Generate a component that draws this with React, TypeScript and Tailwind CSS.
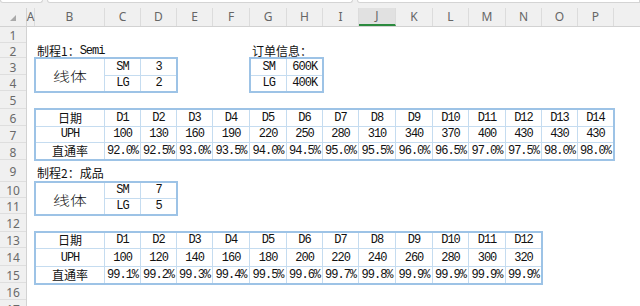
import React from "react";

const mono =
  "font-['Liberation_Mono','Noto_Sans_CJK_SC',monospace] text-[12px] tracking-[-1px] text-[#111]";
const cjk = "font-['Noto_Sans_CJK_SC',sans-serif] text-[12px] text-[#111]";

const cols = [
  { l: "A", w: "w-[8px]" },
  { l: "B", w: "w-[70px]" },
  { l: "C", w: "w-[36px]" },
  { l: "D", w: "w-[36px]" },
  { l: "E", w: "w-[36px]" },
  { l: "F", w: "w-[37px]" },
  { l: "G", w: "w-[37px]" },
  { l: "H", w: "w-[36px]" },
  { l: "I", w: "w-[36px]" },
  { l: "J", w: "w-[37px]" },
  { l: "K", w: "w-[37px]" },
  { l: "L", w: "w-[36px]" },
  { l: "M", w: "w-[37px]" },
  { l: "N", w: "w-[36px]" },
  { l: "O", w: "w-[36px]" },
  { l: "P", w: "w-[36px]" },
];

const rows = [
  { n: 1, h: "h-[16px]" },
  { n: 2, h: "h-[15px]" },
  { n: 3, h: "h-[17px]" },
  { n: 4, h: "h-[16px]" },
  { n: 5, h: "h-[18px]" },
  { n: 6, h: "h-[17px]" },
  { n: 7, h: "h-[17px]" },
  { n: 8, h: "h-[17px]" },
  { n: 9, h: "h-[22px]" },
  { n: 10, h: "h-[16px]" },
  { n: 11, h: "h-[16px]" },
  { n: 12, h: "h-[18px]" },
  { n: 13, h: "h-[16px]" },
  { n: 14, h: "h-[18px]" },
  { n: 15, h: "h-[17px]" },
  { n: 16, h: "h-[17px]" },
  { n: 17, h: "h-[17px]" },
];

const t1 = {
  days: ["D1", "D2", "D3", "D4", "D5", "D6", "D7", "D8", "D9", "D10", "D11", "D12", "D13", "D14"],
  uph: ["100", "130", "160", "190", "220", "250", "280", "310", "340", "370", "400", "430", "430", "430"],
  rate: ["92.0%", "92.5%", "93.0%", "93.5%", "94.0%", "94.5%", "95.0%", "95.5%", "96.0%", "96.5%", "97.0%", "97.5%", "98.0%", "98.0%"],
};

const t2 = {
  days: ["D1", "D2", "D3", "D4", "D5", "D6", "D7", "D8", "D9", "D10", "D11", "D12"],
  uph: ["100", "120", "140", "160", "180", "200", "220", "240", "260", "280", "300", "320"],
  rate: ["99.1%", "99.2%", "99.3%", "99.4%", "99.5%", "99.6%", "99.7%", "99.8%", "99.9%", "99.9%", "99.9%", "99.9%"],
};

function C({ children, f = mono }: { children: React.ReactNode; f?: string }) {
  return (
    <div className={`bg-white flex items-end justify-center pb-px leading-[14px] whitespace-nowrap ${f}`}>
      {children}
    </div>
  );
}

function Merged({ children }: { children: React.ReactNode }) {
  return (
    <div className="bg-white row-span-2 flex items-center justify-center pt-[3px]">
      <span className="inline-block scale-x-[1.3] font-['Noto_Sans_CJK_SC',sans-serif] font-light text-[13px] leading-[14px] text-[#111]">
        {children}
      </span>
    </div>
  );
}

export default function App() {
  return (
    <div className="w-[640px] h-[306px] overflow-hidden bg-white flex flex-col">
      {/* formula bar edge */}
      <div className="h-[8px] shrink-0 bg-[#f0f0f0] flex gap-[4px] items-start">
        <div className="w-[43px] h-[3px] bg-white border border-t-0 border-[#d4d4d4] rounded-b-[3px]" />
        <div className="w-[306px] h-[3px] bg-white border border-t-0 border-[#d4d4d4] rounded-b-[3px]" />
        <div className="flex-1 h-[3px] bg-white border border-t-0 border-[#d4d4d4] rounded-bl-[3px]" />
      </div>

      {/* column header */}
      <div className="h-[19px] shrink-0 flex bg-[#f0f0f0] border-b border-[#d2d2d2] font-['Noto_Sans',sans-serif] text-[12px] text-[#666]">
        <div className="w-[27px] shrink-0 border-r border-[#d2d2d2] flex items-center justify-center">
          <svg width="6" height="6" viewBox="0 0 6 6" className="mt-[1px]">
            <polygon points="6,0 6,6 0,6" fill="#a9a9a9" />
          </svg>
        </div>
        {cols.map((c) => (
          <div
            key={c.l}
            className={`${c.w} shrink-0 border-r border-[#dcdcdc] flex items-center justify-center overflow-visible relative ${
              c.l === "J" ? "bg-[#e1e1e1] border-b-2 border-b-[#2b8a3e]" : ""
            }`}
          >
            <span className="leading-none">{c.l}</span>
          </div>
        ))}
        <div className="flex-1" />
      </div>

      {/* body */}
      <div className="flex flex-1">
        <div className="w-[27px] shrink-0 bg-[#f0f0f0] border-r border-[#d2d2d2] flex flex-col font-['Noto_Sans',sans-serif] text-[12px] text-[#6a6a6a]">
          {rows.map((r) => (
            <div
              key={r.n}
              className={`${r.h} shrink-0 border-b border-[#dedede] flex items-center justify-center pt-[3px] leading-none`}
            >
              {r.n}
            </div>
          ))}
        </div>

        <div className="flex-1 grid grid-cols-[8px_70px_36px_36px_36px_37px_37px_36px_36px_37px_37px_36px_37px_36px_36px_36px_1fr] grid-rows-[16px_15px_17px_16px_18px_17px_17px_17px_22px_16px_16px_18px_16px_18px_17px_17px_17px]">
          {/* 制程1 label */}
          <div className={`col-start-2 row-start-2 flex items-end pl-[2px] whitespace-nowrap leading-[14px] ${cjk}`}>
            <span>制程1：</span>
            <span className="font-['Liberation_Mono',monospace] tracking-[-1px]">Semi</span>
          </div>

          {/* 订单信息 label */}
          <div className={`col-start-7 row-start-2 flex items-end pl-[2px] whitespace-nowrap leading-[14px] ${cjk}`}>
            订单信息：
          </div>

          {/* table 线体 1 */}
          <div className="col-start-2 col-span-3 row-start-3 row-span-2 flex flex-col">
            <div className="flex-1 -m-px border-2 border-[#9dc3e6] bg-[#c5dcf0] grid gap-px grid-cols-[70fr_36fr_36fr] grid-rows-[17fr_16fr]">
              <Merged>线体</Merged>
              <C>SM</C>
              <C>3</C>
              <C>LG</C>
              <C>2</C>
            </div>
          </div>

          {/* 订单信息 table */}
          <div className="col-start-7 col-span-2 row-start-3 row-span-2 flex flex-col">
            <div className="flex-1 -m-px border-2 border-[#9dc3e6] bg-[#c5dcf0] grid gap-px grid-cols-[37fr_36fr] grid-rows-[17fr_16fr]">
              <C>SM</C>
              <C>600K</C>
              <C>LG</C>
              <C>400K</C>
            </div>
          </div>

          {/* table days 1 */}
          <div className="col-start-2 col-span-15 row-start-6 row-span-3 flex flex-col">
            <div className="flex-1 -m-px border-2 border-[#9dc3e6] bg-[#c5dcf0] grid gap-px grid-cols-[70fr_36fr_36fr_36fr_37fr_37fr_36fr_36fr_37fr_37fr_36fr_37fr_36fr_36fr_36fr] grid-rows-[17fr_17fr_17fr]">
              <C f={cjk}>日期</C>
              {t1.days.map((d) => (
                <C key={d}>{d}</C>
              ))}
              <C>UPH</C>
              {t1.uph.map((d, i) => (
                <C key={i}>{d}</C>
              ))}
              <C f={cjk}>直通率</C>
              {t1.rate.map((d, i) => (
                <C key={i}>{d}</C>
              ))}
            </div>
          </div>

          {/* 制程2 label */}
          <div className={`col-start-2 row-start-9 flex items-end pb-[2px] pl-[2px] whitespace-nowrap leading-[14px] ${cjk}`}>
            制程2：成品
          </div>

          {/* table 线体 2 */}
          <div className="col-start-2 col-span-3 row-start-10 row-span-2 flex flex-col">
            <div className="flex-1 -m-px border-2 border-[#9dc3e6] bg-[#c5dcf0] grid gap-px grid-cols-[70fr_36fr_36fr] grid-rows-[16fr_16fr]">
              <Merged>线体</Merged>
              <C>SM</C>
              <C>7</C>
              <C>LG</C>
              <C>5</C>
            </div>
          </div>

          {/* table days 2 */}
          <div className="col-start-2 col-span-13 row-start-13 row-span-3 flex flex-col">
            <div className="flex-1 -m-px border-2 border-[#9dc3e6] bg-[#c5dcf0] grid gap-px grid-cols-[70fr_36fr_36fr_36fr_37fr_37fr_36fr_36fr_37fr_37fr_36fr_37fr_36fr] grid-rows-[16fr_18fr_17fr]">
              <C f={cjk}>日期</C>
              {t2.days.map((d) => (
                <C key={d}>{d}</C>
              ))}
              <C>UPH</C>
              {t2.uph.map((d, i) => (
                <C key={i}>{d}</C>
              ))}
              <C f={cjk}>直通率</C>
              {t2.rate.map((d, i) => (
                <C key={i}>{d}</C>
              ))}
            </div>
          </div>
        </div>
      </div>
    </div>
  );
}
